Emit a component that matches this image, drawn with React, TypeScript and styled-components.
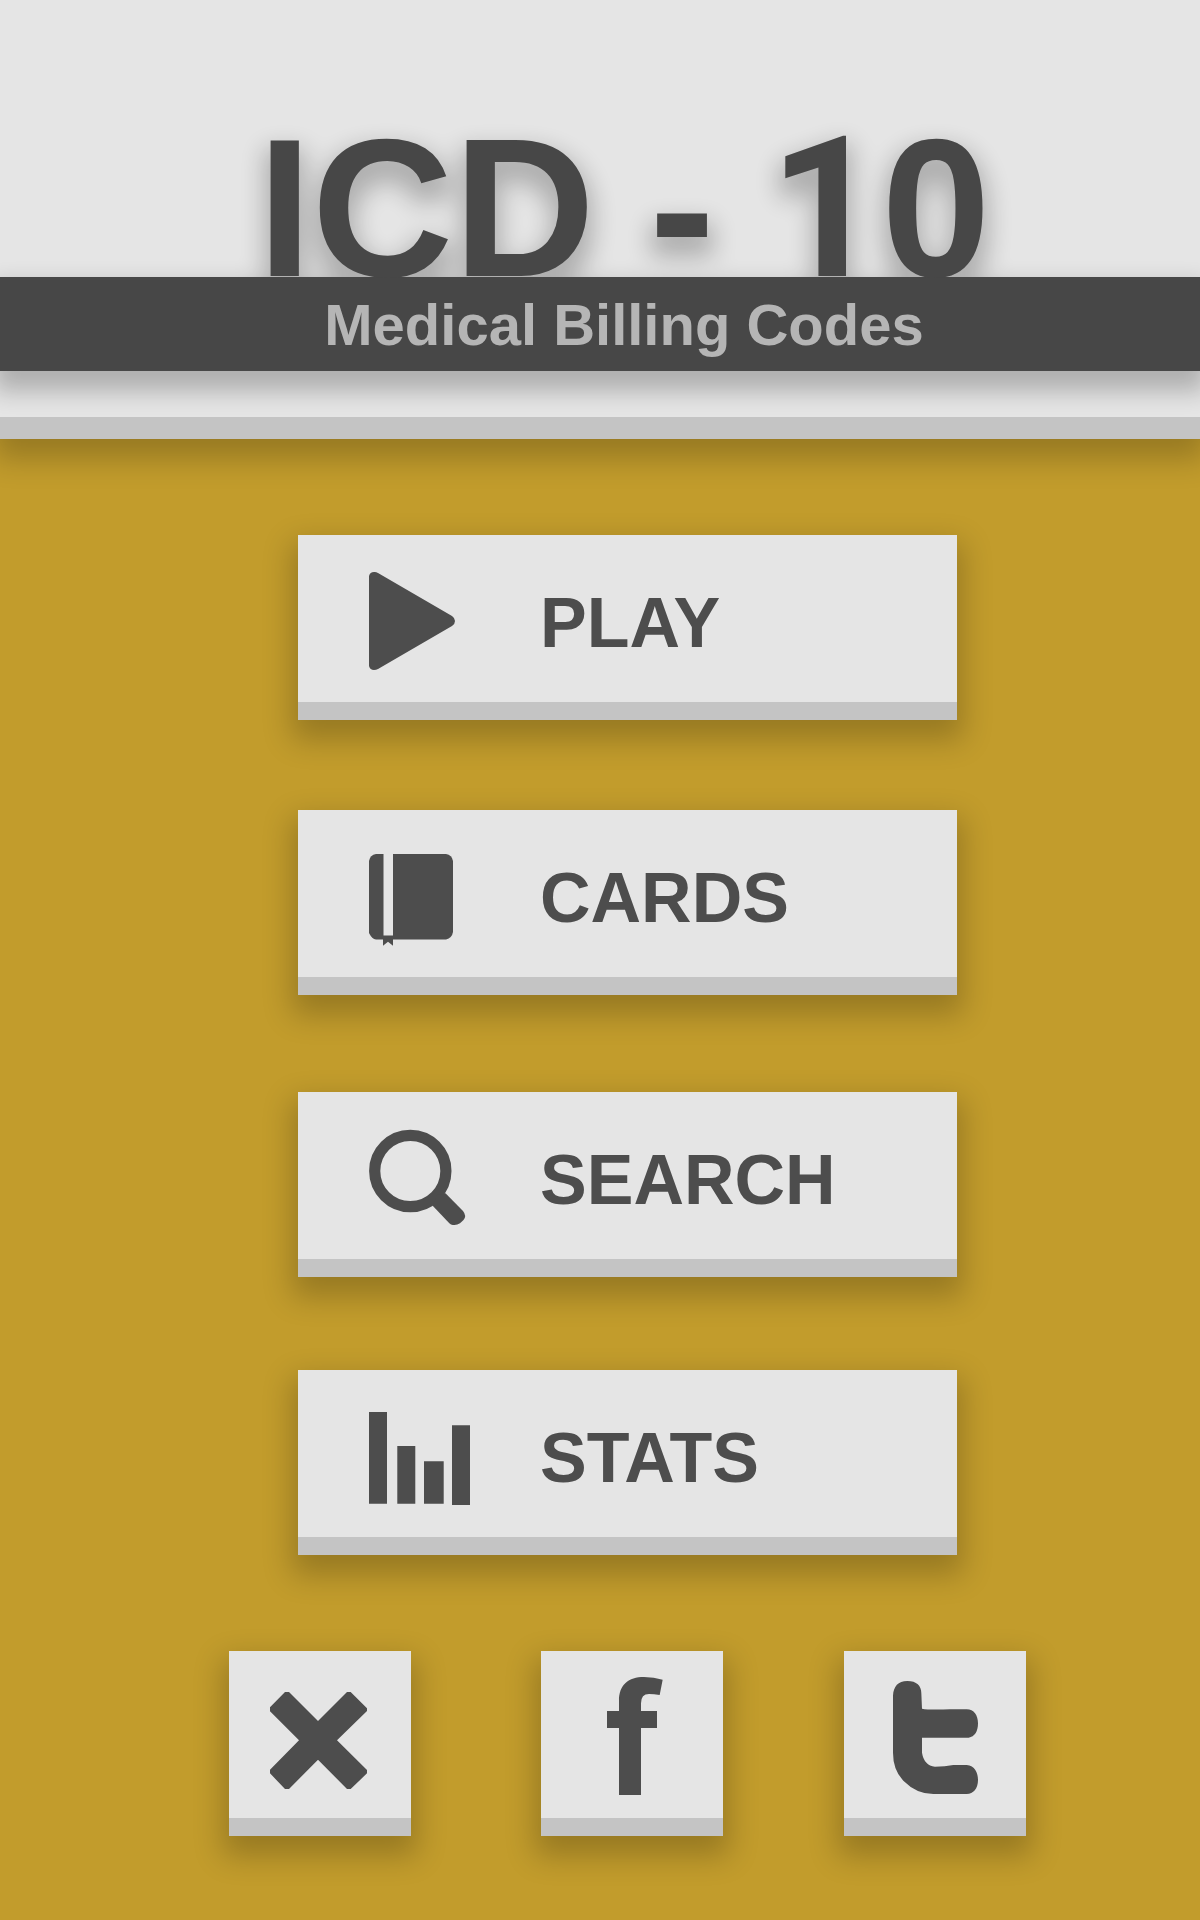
import React from "react";
import styled, { createGlobalStyle } from "styled-components";

const GlobalStyle = createGlobalStyle`
  *, *::before, *::after { box-sizing: border-box; }
  body {
    margin: 0;
    background: #c29c2c;
    font-family: "Liberation Sans", Arial, sans-serif;
    font-weight: 700;
  }
`;

const Page = styled.div`
  min-height: 100vh;
  overflow-x: hidden;
`;

const Header = styled.header`
  padding: 141px 0 46px;
  background: #e5e5e5;
  border-bottom: 22px solid #c4c4c4;
  box-shadow: 0 14px 28px 6px rgba(0, 0, 0, 0.22);
`;

const FilterDefs = styled.svg`
  display: block;
  width: 0;
  height: 0;
`;

const Banner = styled.div`
  color: #474747;
  text-align: center;
  filter: url(#banner-shadow);
`;

const Title = styled.h1`
  margin: 0;
  padding-left: 48px;
  font-size: 196px;
  line-height: 136px;
  white-space: nowrap;
`;

const PlainOne = styled.span`
  font-family: Roboto, sans-serif;
  line-height: 1px;
`;

const Subtitle = styled.p`
  margin: 0;
  padding: 2px 0 0 48px;
  background: #474747;
  color: #b5b5b5;
  font-size: 58px;
  line-height: 92px;
`;

const Main = styled.main`
  display: flex;
  flex-direction: column;
  align-items: center;
  padding: 96px 0 84px 55px;
`;

const Menu = styled.nav`
  display: flex;
  flex-direction: column;
  width: 100%;
  max-width: 659px;
`;

const tile = `
  border: 0;
  border-bottom: 18px solid #c4c4c4;
  border-radius: 0;
  background: #e5e5e5;
  color: #4d4d4d;
  box-shadow: 0 14px 28px 6px rgba(0, 0, 0, 0.22);
  cursor: pointer;
`;

const MenuButton = styled.button<{ $space: number }>`
  ${tile}
  display: flex;
  align-items: center;
  gap: 67px;
  height: 185px;
  margin: 0 0 ${(p) => p.$space}px;
  padding: 8px 0 0 71px;
  font: inherit;
  font-size: 70px;
  line-height: 80px;
`;

const MenuIcon = styled.svg`
  flex: none;
  width: 104px;
  height: 104px;
  fill: currentColor;
`;

const Shortcuts = styled.div`
  display: grid;
  grid-template-columns: 312px 303px 182px;
`;

const ShortcutButton = styled.button`
  ${tile}
  width: 182px;
  height: 185px;
  padding: 0;
`;

const ShortcutLink = styled.a`
  ${tile}
  width: 182px;
  height: 185px;
`;

const ShortcutIcon = styled.svg`
  display: block;
  width: 182px;
  height: 167px;
  fill: currentColor;
`;

const items = [
  {
    label: "PLAY",
    space: 90,
    icon: (
      <path d="M0 5Q1 1 5 1Q7 .7 9 2L83 45Q86 47 86 50Q86 53 83 55L9 98Q7 99 5 99Q1 99 0 95Z" />
    ),
  },
  {
    label: "CARDS",
    space: 97,
    icon: (
      <>
        <path d="M7 8H14.5V93.5H7Q3 93 0 87V15Q1 9 7 8Z" />
        <path d="M24 8H77Q83 9 84 15V86Q83 92 77 93.5H24Z" />
        <path d="M14 89.5H24V99.7L19 95.7L14 99.7Z" />
      </>
    ),
  },
  {
    label: "SEARCH",
    space: 93,
    icon: (
      <>
        <circle cx="41.3" cy="43" r="35.6" fill="none" stroke="currentColor" strokeWidth="11.2" />
        <path d="M68 67L76.5 65.3L94 83Q98 88 94.5 92L91 95.3Q87 98 82 96.5L80.3 95.3L63.7 77.7Z" />
      </>
    ),
  },
  {
    label: "STATS",
    space: 96,
    icon: (
      <path d="M0 6H18V97.7H0ZM28.3 40H46.3V97.7H28.3ZM55 55.3H74.7V97.7H55ZM83 19.3H101V99H83Z" />
    ),
  },
];

export default function App() {
  return (
    <Page>
      <GlobalStyle />
      <FilterDefs aria-hidden="true">
        <filter
          id="banner-shadow"
          x="-5%"
          y="-30%"
          width="110%"
          height="170%"
          colorInterpolationFilters="sRGB"
        >
          <feMorphology in="SourceAlpha" operator="dilate" radius="6" />
          <feGaussianBlur stdDeviation="12" />
          <feOffset dy="14" />
          <feComponentTransfer result="shadow">
            <feFuncA type="linear" slope="0.24" />
          </feComponentTransfer>
          <feMerge>
            <feMergeNode in="shadow" />
            <feMergeNode in="SourceGraphic" />
          </feMerge>
        </filter>
      </FilterDefs>
      <Header>
        <Banner>
          <Title>
            ICD - <PlainOne>1</PlainOne>0
          </Title>
          <Subtitle>Medical Billing Codes</Subtitle>
        </Banner>
      </Header>
      <Main>
        <Menu aria-label="Main menu">
          {items.map((item) => (
            <MenuButton key={item.label} type="button" $space={item.space}>
              <MenuIcon viewBox="0 0 104 104" aria-hidden="true">
                {item.icon}
              </MenuIcon>
              {item.label}
            </MenuButton>
          ))}
        </Menu>
        <Shortcuts>
          <ShortcutButton type="button" aria-label="Close">
            <ShortcutIcon viewBox="57 63 546 501" aria-hidden="true">
              <path d="M225 186H237L324 273L411 186H422L471 235V243L381 331L471 420V430L422 477H411L324 389L237 477H225L180 430V419L267 331L180 244V232Z" />
            </ShortcutIcon>
          </ShortcutButton>
          <ShortcutLink href="#facebook" aria-label="Facebook">
            <ShortcutIcon viewBox="63 63 546 501" aria-hidden="true">
              <path d="M297 495V294H261V243H297V212C297 165 325 141 372 141Q402 141 428 149L419 195Q402 192 387 192Q363 192 363 220V243H411V294H363V495Z" />
            </ShortcutIcon>
          </ShortcutLink>
          <ShortcutLink href="#twitter" aria-label="Twitter">
            <ShortcutIcon viewBox="72 63 546 501" aria-hidden="true">
              <path d="M219 197C221 169 234 153 262 153C290 153 304 167 304 190L306 236Q325 240 390 238H440C462 238 474 256 474 280C474 304 464 321 446 323H306V368Q312 406 345 410Q375 410 400 405H440C464 407 474 428 474 450C474 476 460 492 440 492H340Q290 492 250 452Q219 420 219 368Z" />
            </ShortcutIcon>
          </ShortcutLink>
        </Shortcuts>
      </Main>
    </Page>
  );
}
